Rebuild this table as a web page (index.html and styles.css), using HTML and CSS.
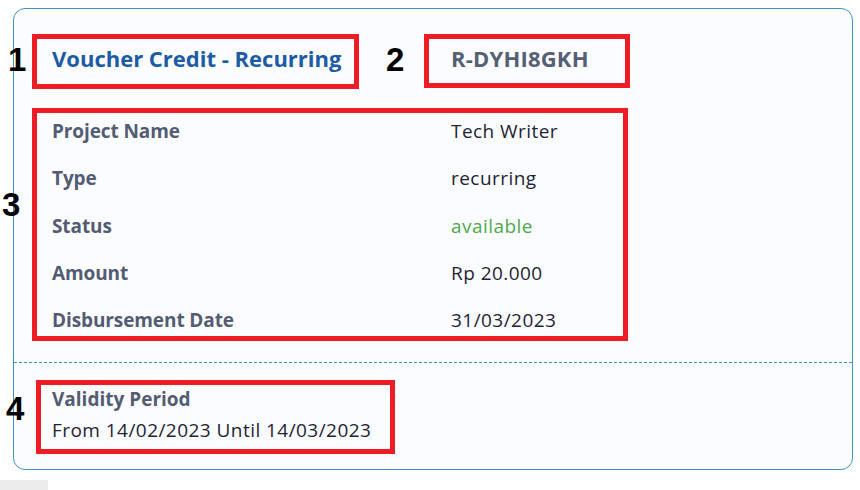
FILE: index.html
```html
<!DOCTYPE html>
<html lang="en">
<head>
<meta charset="utf-8">
<title>Voucher</title>
<link rel="stylesheet" href="styles.css">
</head>
<body>
<div class="card">
  <div class="head">
    <div class="mark box1"><span class="num n1">1</span><h2 class="title">Voucher Credit - Recurring</h2></div>
    <div class="mark box2"><span class="num n2">2</span><span class="code">R-DYHI8GKH</span></div>
  </div>
  <div class="mark box3">
    <span class="num n3">3</span>
    <dl class="rows">
      <dt>Project Name</dt><dd>Tech Writer</dd>
      <dt>Type</dt><dd>recurring</dd>
      <dt>Status</dt><dd class="ok">available</dd>
      <dt>Amount</dt><dd>Rp 20.000</dd>
      <dt>Disbursement Date</dt><dd>31/03/2023</dd>
    </dl>
  </div>
  <div class="foot">
    <div class="mark box4">
      <span class="num n4">4</span>
      <div class="vlabel">Validity Period</div>
      <div class="vvalue">From 14/02/2023 Until 14/03/2023</div>
    </div>
  </div>
</div>
<div class="stub"></div>
</body>
</html>
```
FILE: styles.css
```css
* { box-sizing: border-box; margin: 0; padding: 0; }
html, body { background: #ffffff; }
body {
  font-family: "Open Sans", "Noto Sans", sans-serif;
  width: 860px;
  height: 490px;
  position: relative;
  overflow: hidden;
}
.card {
  margin: 8px 0 0 13px;
  width: 840px;
  height: 462px;
  border: 1px solid #3b94d0;
  border-radius: 12px;
  background: #fafcff;
  padding: 25px 0 0 18px;
}
.mark {
  border: 5px solid #ee1c25;
  position: relative;
}
.num {
  position: absolute;
  font-family: "Liberation Sans", sans-serif;
  font-weight: 700;
  font-size: 33px;
  line-height: 34px;
  color: #000;
}
.head { display: flex; align-items: flex-start; gap: 65px; }
.box1 { width: 327px; height: 55px; padding: 5px 0 0 15px; }
.n1 { left: -29px; top: 4px; }
.title { font-size: 22px; font-weight: 700; color: #1d5ba6; line-height: 28px; }
.box2 { width: 206px; height: 54px; padding: 5px 0 0 22px; }
.n2 { left: -43px; top: 4px; }
.code { display: block; font-size: 22px; font-weight: 700; color: #565f73; line-height: 28px; letter-spacing: 0.2px; }
.box3 { margin-top: 19px; width: 596px; height: 233px; padding: 6px 0 0 15px; }
.n3 { left: -35px; top: 75px; }
.rows { display: grid; grid-template-columns: 399px 1fr; row-gap: 23.3px; }
.rows dt, .rows dd { font-size: 19px; line-height: 24px; }
.rows dt { font-weight: 700; color: #535c72; letter-spacing: -0.1px; }
.rows dd { color: #1f2433; letter-spacing: 0.45px; }
.rows dd.ok { color: #4fa94d; }
.foot { margin: 21px 0 0 -18px; border-top: 1px dashed #3b94d0; padding: 17px 0 0 22px; }
.box4 { width: 359px; height: 74px; padding: 0 0 0 11px; display: flex; flex-direction: column; gap: 3px; }
.n4 { left: -35px; top: 7px; }
.vlabel { font-size: 19px; line-height: 28px; font-weight: 700; color: #535c72; }
.vvalue { font-size: 19px; line-height: 28px; color: #1f2433; letter-spacing: 0.45px; }
.stub { position: absolute; left: 0; top: 480px; width: 48px; height: 10px; background: #ececec; }
```
